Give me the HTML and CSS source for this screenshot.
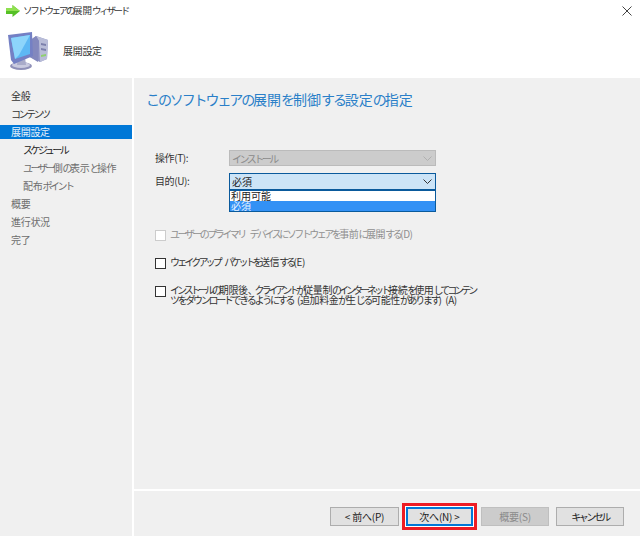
FILE: index.html
```html
<!DOCTYPE html>
<html lang="ja">
<head>
<meta charset="utf-8">
<title>ソフトウェアの展開ウィザード</title>
<link rel="stylesheet" href="styles.css">
</head>
<body>
<div class="window">
  <div class="titlebar">
    <svg class="title-icon" width="14" height="12" viewBox="0 0 14 12"><path d="M0 3h6.500V0L14 6l-7.500 6V9H0z" fill="#55c026"/><path d="M6.500 0L14 6H0V3h6.500z" fill="#8fe04f"/></svg>
    <span class="title-text"><span class="k">ソフトウェアの</span>展開<span class="k">ウィザード</span></span>
    <svg class="close" width="10" height="10" viewBox="0 0 10 10"><path d="M0.500 0.500l9 9M9.500 0.500l-9 9" stroke="#444" stroke-width="1" fill="none"/></svg>
  </div>
  <div class="header">
    <svg class="computer" width="44" height="44" viewBox="0 0 44 44">
      <ellipse cx="15" cy="37" rx="11" ry="4" fill="#8f90b8"/>
      <ellipse cx="15" cy="36" rx="9" ry="3" fill="#c9cadf"/>
      <path d="M12 28h7l1 8h-9z" fill="#a9abc9"/>
      <path d="M22 13l8-6 12 4-1 19-7 3-12-6z" fill="#8f93c4"/>
      <path d="M30 7l12 4-1 19-7 3-1-21z" fill="#b9bdd8"/>
      <path d="M22 13l8-6 3 5-1 21-10-6z" fill="#8388bd"/>
      <path d="M35 14l5 1v2l-5-1zM35 19l5 1v2l-5-1z" fill="#7c80ac"/>
      <path d="M35 26l5-1v2l-5 1z" fill="#8fd070"/>
      <path d="M2 6l24-3 1 24-19 8-3-4z" fill="#7480c4"/>
      <path d="M5 9l19-3 0 19-15 5z" fill="#5db8f4"/>
      <path d="M5 9l19-3-11 20-4 4z" fill="#8dd5fb"/>
    </svg>
    <span class="header-text">展開設定</span>
  </div>
  <div class="body">
    <nav class="sidebar">
      <div class="nav-item">全般</div>
      <div class="nav-item"><span class="k">コンテンツ</span></div>
      <div class="nav-item selected">展開設定</div>
      <div class="nav-item sub dark"><span class="k">スケジュール</span></div>
      <div class="nav-item sub muted"><span class="k">ユーザー</span>側<span class="k">の</span>表示<span class="k">と</span>操作</div>
      <div class="nav-item sub muted">配布<span class="k">ポイント</span></div>
      <div class="nav-item muted">概要</div>
      <div class="nav-item muted">進行状況</div>
      <div class="nav-item muted">完了</div>
    </nav>
    <main class="main">
      <div class="content">
        <h1 class="heading"><span class="k">このソフトウェアの</span>展開<span class="k">を</span>制御<span class="k">する</span>設定<span class="k">の</span>指定</h1>
        <div class="form">
          <label class="field-label">操作(T):</label>
          <div class="select disabled"><span class="k">インストール</span>
            <svg class="chev" width="9" height="5" viewBox="0 0 9 5"><path d="M0.500 0.500l4 4 4-4" stroke="#b0b0b0" fill="none"/></svg>
          </div>
          <label class="field-label">目的(U):</label>
          <div class="combo">
            <div class="select open"><span>必須</span>
              <svg class="chev" width="9" height="5" viewBox="0 0 9 5"><path d="M0.500 0.500l4 4 4-4" stroke="#333" fill="none"/></svg>
            </div>
            <ul class="dropdown">
              <li>利用可能</li>
              <li class="active">必須</li>
            </ul>
          </div>
        </div>
        <div class="check check-first muted-check"><span class="box"></span><span class="check-text"><span class="k">ユーザーのプライマリ デバイスにソフトウェアを</span>事前<span class="k">に</span>展開<span class="k">する</span>(D)</span></div>
        <div class="check check-wake"><span class="box"></span><span class="check-text"><span class="k">ウェイクアップ パケットを</span>送信<span class="k">する</span>(E)</span></div>
        <div class="check check-metered"><span class="box"></span><span class="check-text"><span class="k">インストールの</span>期限後<span class="k">、クライアントが</span>従量制<span class="k">のインターネット</span>接続<span class="k">を</span>使用<span class="k">してコンテン</span><br><span class="k2">ツをダウンロードできるようにする</span> (追加料金<span class="k2">が</span>生<span class="k2">じる</span>可能性<span class="k2">があります</span>) (A)</span></div>
      </div>
      <div class="footer">
        <button class="btn prev">&lt; 前へ(P)</button>
        <button class="btn next">次へ(N) &gt;</button>
        <button class="btn off">概要(S)</button>
        <button class="btn cancel"><span class="k">キャンセル</span></button>
      </div>
    </main>
  </div>
</div>
</body>
</html>
```
FILE: styles.css
```css
* { box-sizing: border-box; }
html, body { margin: 0; padding: 0; }
body {
  width: 640px;
  height: 536px;
  overflow: hidden;
  background: #fff;
  font-family: "Noto Sans CJK JP", "Noto Sans", sans-serif;
  font-size: 10px;
  color: #222;
}
.k { letter-spacing: -2.500px; }
.window { width: 640px; height: 536px; display: flex; flex-direction: column; }
.titlebar { height: 21px; display: flex; align-items: center; padding-left: 6px; }
.title-icon { margin-right: 3px; }
.title-text { font-size: 9.500px; color: #333; line-height: 1; }
.title-text .k { letter-spacing: -2.350px; }
.close { margin-left: auto; margin-right: 8px; }
.header { height: 57px; display: flex; align-items: center; padding-left: 6px; background: #fff; }
.computer { margin-right: 13px; margin-top: 3px; }
.header-text { font-size: 10px; letter-spacing: -0.300px; color: #333; margin-top: 1px; }
.body { flex: 1; display: flex; min-height: 0; }
.sidebar { width: 132px; background: #f0f0f0; padding-top: 9px; flex: none; }
.nav-item { height: 18px; line-height: 18px; padding-left: 11px; letter-spacing: -0.300px; color: #333; }
.nav-item.sub { padding-left: 23px; }
.nav-item.dark { color: #222; }
.nav-item.muted { color: #6d6d6d; }
.nav-item.selected { background: #0078d7; color: #e6f1fb; height: 14px; line-height: 14px; margin: 2px 0; }
.main { flex: 1; margin-left: 2px; background: #f0f0f0; display: flex; flex-direction: column; min-width: 0; }
.content { flex: 1; border-bottom: 2px solid #fff; padding: 11px 0 0 13px; }
.heading { margin: 0 0 0 -1px; font-size: 14px; font-weight: 400; line-height: 20px; color: #2a7fc8; }
.heading .k { letter-spacing: -2.100px; }
.form { display: grid; grid-template-columns: 74px 207px; row-gap: 7px; margin: 41px 0 0 8px; align-items: start; }
.field-label { line-height: 16px; letter-spacing: -0.400px; color: #333; }
.select { height: 16px; display: flex; align-items: center; justify-content: space-between; padding: 0 3px 0 2px; border: 1px solid #bbb; }
.select.disabled { background: #ccc; color: #8a8a8a; }
.select.open { height: 17px; background: #cce4f7; border-color: #0a5a9c; color: #222; }
.combo { position: relative; }
.dropdown { position: absolute; top: 17px; left: 0; width: 207px; margin: 0; padding: 0; list-style: none; border: 1px solid #0a5a9c; background: #fff; height: 22px; }
.dropdown li { height: 10px; line-height: 10px; padding-left: 1px; color: #222; }
.dropdown li.active { background: #3391f5; color: #e8f3fe; line-height: 9px; }
.check { display: flex; align-items: flex-start; margin-left: 8px; }
.box { flex: none; width: 11px; height: 11px; border: 1px solid #333; background: #fff; margin-right: 4px; }
.check-text { letter-spacing: -0.400px; word-spacing: 5px; line-height: 10px; color: #333; white-space: nowrap; margin-top: -1px; }
.check-text .k { letter-spacing: -3px; }
.check-text .k2 { letter-spacing: -2.300px; }
.check-first { margin-top: 40px; }
.check-first .check-text .k { letter-spacing: -2.500px; }
.check-wake .check-text .k { letter-spacing: -2.850px; }
.muted-check .box { border-color: #ccc; }
.muted-check .check-text { color: #8f8f8f; }
.check-wake { margin-top: 17px; }
.check-metered { margin-top: 17px; }
.check-metered .check-text { word-spacing: 2px; }
.footer { height: 45px; flex: none; display: flex; padding: 16px 0 0 196px; align-items: flex-start; }
.btn { width: 68px; height: 19px; padding: 0; background: #e1e1e1; border: 1px solid #adadad; font: inherit; letter-spacing: -0.200px; color: #222; line-height: 15px; }
.btn.prev { width: 69px; margin-right: 7px; }
.btn.next { width: 67px; margin-right: 8px; border: 2px solid #0078d7; box-shadow: 0 0 0 1px #fff, 0 0 0 4px #ed1c24; }
.btn.off { background: #ccc; border-color: #bfbfbf; color: #8a8a8a; margin-right: 7px; }
```
